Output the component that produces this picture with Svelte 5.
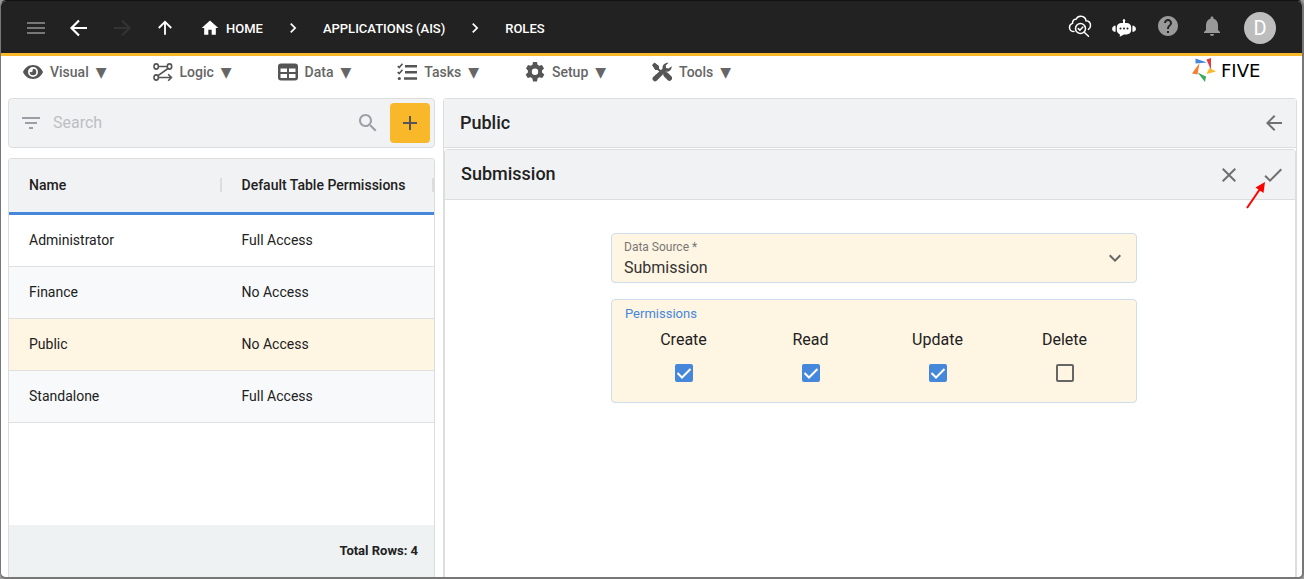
<script>
	const menus = ["Visual", "Logic", "Data", "Tasks", "Setup", "Tools"];

	let roles = [
		{ name: "Administrator", access: "Full Access" },
		{ name: "Finance", access: "No Access" },
		{ name: "Public", access: "No Access" },
		{ name: "Standalone", access: "Full Access" }
	];

	let permissions = [
		{ name: "Create", checked: true },
		{ name: "Read", checked: true },
		{ name: "Update", checked: true },
		{ name: "Delete", checked: false }
	];

	let selected = "Public";
	let search = "";
	let source = "Submission";
</script>

<div class="window">
	<header>
		<button class="icon dim" aria-label="Menu">
			<svg width="24" height="24" viewBox="0 0 24 24"><path d="M3 18h18v-2H3v2zm0-5h18v-2H3v2zm0-7v2h18V6H3z" /></svg>
		</button>
		<button class="icon" aria-label="Back">
			<svg width="24" height="24" viewBox="0 0 24 24"><path class="line" d="M20 12H5M12 4.500L4.500 12l7.500 7.500" /></svg>
		</button>
		<button class="icon off" aria-label="Forward" disabled>
			<svg width="24" height="24" viewBox="0 0 24 24"><path class="line" d="M4 12h15M12 4.500l7.500 7.500-7.500 7.500" /></svg>
		</button>
		<button class="icon" aria-label="Up">
			<svg width="20" height="20" viewBox="0 0 24 24"><path class="line" d="M12 20V5M4.500 12L12 4.500l7.500 7.500" /></svg>
		</button>
		<nav class="crumbs">
			<a href="#home">
				<svg width="20" height="20" viewBox="0 0 24 24"><path d="M10 20v-6h4v6h5v-8h3L12 3 2 12h3v8z" /></svg>
				HOME
			</a>
			<svg width="20" height="20" viewBox="0 0 24 24"><path d="M10 6L8.590 7.410 13.170 12l-4.580 4.590L10 18l6-6z" /></svg>
			<a href="#applications">APPLICATIONS (AIS)</a>
			<svg width="20" height="20" viewBox="0 0 24 24"><path d="M10 6L8.590 7.410 13.170 12l-4.580 4.590L10 18l6-6z" /></svg>
			<a href="#roles">ROLES</a>
		</nav>
		<div class="actions">
			<button class="icon raised" aria-label="Inspect cloud">
				<svg width="24" height="24" viewBox="0 0 24 24">
					<g fill="none" stroke="currentColor" stroke-width="1.500" stroke-linecap="round">
						<path d="M6 17.500C3.500 17.500 1.500 15.800 1.500 13.400c0-2 1.300-3.500 3-4C4.300 6.500 6 5 8 5.200 9 3.200 10.800 2 13 2.200c2.700.2 4.700 2 5 4.600 2.600.2 4.500 2.200 4.500 4.700 0 1.700-.8 3.100-2.100 3.900" />
						<circle cx="12.500" cy="14.500" r="5" />
						<path d="M16.200 18.200l4.300 4.100M10.300 14.600l1.600 1.600 3-3.200" />
					</g>
				</svg>
			</button>
			<button class="icon" aria-label="Assistant">
				<svg width="24" height="24" viewBox="0 0 24 24">
					<path d="M11 5.300a1.300 1.300 0 1 1 2 0V7h1.500c2.800 0 4.700 1.700 4.700 4.500v2.300c0 2.800-1.900 4.700-4.700 4.700H12l-4.200 2.300v-2.600C5.800 17.600 4.800 16 4.800 13.800v-2.300C4.800 8.700 6.700 7 9.500 7H11z" />
					<path d="M2.200 9.800h1.400v6H2.200c-.8 0-1-.6-1-1.200h-1v-3.300h1c0-.8.300-1.500 1-1.500zM20.400 9.800h1.400c.7 0 1 .7 1 1.500h1v3.300h-1c0 .6-.3 1.200-1 1.200h-1.400z" />
					<g fill="#222"><circle cx="8.500" cy="12.500" r="1" /><circle cx="12" cy="12.500" r="1" /><circle cx="15.500" cy="12.500" r="1" /></g>
				</svg>
			</button>
			<button class="icon grey raised" aria-label="Help">
				<svg width="24" height="24" viewBox="0 0 24 24"><path d="M12 2C6.480 2 2 6.480 2 12s4.480 10 10 10 10-4.480 10-10S17.520 2 12 2zm1 17h-2v-2h2v2zm2.070-7.750l-.9.920C13.450 12.900 13 13.500 13 15h-2v-.5c0-1.100.450-2.100 1.170-2.830l1.240-1.260c.370-.360.590-.860.590-1.410 0-1.100-.9-2-2-2s-2 .9-2 2H8c0-2.210 1.790-4 4-4s4 1.790 4 4c0 .880-.360 1.680-.930 2.250z" /></svg>
			</button>
			<button class="icon grey raised" aria-label="Notifications">
				<svg width="24" height="24" viewBox="0 0 24 24"><path d="M12 22c1.100 0 2-.9 2-2h-4c0 1.100.890 2 2 2zm6-6v-5c0-3.070-1.640-5.640-4.500-6.320V4c0-.830-.670-1.500-1.500-1.500s-1.500.670-1.500 1.500v.680C7.630 5.360 6 7.920 6 11v5l-2 2v1h16v-1l-2-2z" /></svg>
			</button>
			<button class="avatar">D</button>
		</div>
	</header>

	<div class="menubar">
		{#each menus as menu}
			<button class="menu">
				<svg width="20" height="20" viewBox="0 0 20 20">
					{#if menu === "Visual"}
						<path fill-rule="evenodd" d="M10 3C5.500 3 1.600 5.800 0 10c1.600 4.200 5.500 7 10 7s8.400-2.800 10-7c-1.600-4.200-5.500-7-10-7zm0 2a5 5 0 1 1 0 10 5 5 0 0 1 0-10z" />
						<path d="M10 6.700a3.300 3.300 0 1 1-3.300 3.300l2.500.3z" />
					{:else if menu === "Logic"}
						<g fill="none" stroke="currentColor" stroke-width="1.600">
							<ellipse cx="3.200" cy="4.500" rx="2.200" ry="2.600" /><ellipse cx="16.500" cy="4.500" rx="2.200" ry="2.600" /><ellipse cx="3.200" cy="15.500" rx="2.200" ry="2.600" />
							<path d="M5.400 4.500h8.900M15 6.500L5 13.700M5.400 15.500h12.500M15.200 12.300l3.200 3.200-3.200 3.200" />
						</g>
					{:else if menu === "Data"}
						<path fill-rule="evenodd" d="M3 1.500h14a3 3 0 0 1 3 3v11a3 3 0 0 1-3 3H3a3 3 0 0 1-3-3v-11a3 3 0 0 1 3-3zM2.500 6.500v3.500H9V6.500zm8.500 0V10h6.500V6.500zM2.500 12v4H9v-4zm8.500 0v4h6.500v-4z" />
					{:else if menu === "Tasks"}
						<path d="M8 3h12v2.400H8zM8 9h12v2.400H8zM7 15.300h13v2.400H7z" />
						<circle cx="2.300" cy="16.500" r="1.600" />
						<path fill="none" stroke="currentColor" stroke-width="1.600" d="M.7 4l1.500 1.500L5.500 1.800M.7 10l1.500 1.500L5.500 7.800" />
					{:else if menu === "Setup"}
						<path fill-rule="evenodd" d="M8 0h4l.6 2.800 1.700 1L17 3l2 3.500-2 1.900v2.100l2.300 2L17.300 16l-2.900-.8-1.800 1L12 19.500H8l-.7-3.300-1.700-1-2.900.8-2-3.500 2.200-2V8.400L1 6.500 3 3l2.700.8 1.700-1zM10 6.500a3.200 3.200 0 1 0 0 6.400 3.200 3.200 0 0 0 0-6.400z" />
					{:else}
						<path d="M2.500.5L7 4v2.500l3 2.700-1.500 1.500L5.500 8H3.200L0 3zM12 10.500c1.500-.8 3-.5 4 .5l3.300 3.300a2.600 2.600 0 0 1-3.700 3.700L12 14.500c-.8-1-1-2.300-.5-3.300z" />
						<path d="M19.600 4.200A5 5 0 0 1 13.500 9.700L5 18.600a2.700 2.700 0 0 1-3.900-3.700l9.400-8.200C10.200 3 12.800.4 16.500.7l-2.800 2.800.4 2.400 2.500.5z" />
					{/if}
				</svg>
				<span>{menu}</span>
				<span class="caret">▼</span>
			</button>
		{/each}
		<a class="logo" href="#five">
			<svg width="24" height="24" viewBox="0 0 24 24">
				<path fill="#4587da" d="M3.500.5L15 4.500 3.500 5.500z" />
				<path fill="#e0393e" d="M19 0v12L14.500 1.500z" />
				<path fill="#f8b82a" d="M14.500 16l3-6 6.500 3.500z" />
				<path fill="#3cab5a" d="M5.500 14.500l8.500 4-1 5.500z" />
				<path fill="#f77f30" d="M0 15.500L7.500 5 5.500 16.500z" />
			</svg>
			<span>FIVE</span>
		</a>
	</div>

	<main>
		<section class="list">
			<div class="search">
				<svg width="24" height="24" viewBox="0 0 24 24"><path d="M10 18h4v-2h-4v2zM3 6v2h18V6H3zm3 7h12v-2H6v2z" /></svg>
				<input type="text" placeholder="Search" aria-label="Search" bind:value={search} />
				<svg width="24" height="24" viewBox="0 0 24 24"><path d="M15.500 14h-.790l-.280-.270C15.410 12.590 16 11.110 16 9.500 16 5.910 13.090 3 9.500 3S3 5.910 3 9.500 5.910 16 9.500 16c1.610 0 3.090-.590 4.230-1.570l.270.280v.790l5 4.990L20.490 19l-4.990-5zm-6 0C7.010 14 5 11.990 5 9.500S7.010 5 9.500 5 14 7.010 14 9.500 11.990 14 9.500 14z" /></svg>
				<button class="add" aria-label="Add">
					<svg width="24" height="24" viewBox="0 0 24 24"><path d="M19 13h-6v6h-2v-6H5v-2h6V5h2v6h6v2z" /></svg>
				</button>
			</div>
			<div class="card">
				<table>
					<thead>
						<tr>
							<th><div>Name</div></th>
							<th><div>Default Table Permissions</div></th>
						</tr>
					</thead>
					<tbody>
						{#each roles as role}
							<tr class:selected={role.name === selected} on:click={() => (selected = role.name)}>
								<td>{role.name}</td>
								<td>{role.access}</td>
							</tr>
						{/each}
					</tbody>
				</table>
				<div class="total">Total Rows: {roles.length}</div>
			</div>
		</section>

		<section class="detail">
			<div class="bar">
				<h1>{selected}</h1>
				<button class="icon" aria-label="Close role">
					<svg width="24" height="24" viewBox="0 0 24 24"><path d="M20 11H7.830l5.590-5.590L12 4l-8 8 8 8 1.410-1.410L7.830 13H20v-2z" /></svg>
				</button>
			</div>
			<div class="inner">
				<div class="bar">
					<h2>{source}</h2>
					<button class="icon" aria-label="Cancel">
						<svg width="24" height="24" viewBox="0 0 24 24"><path d="M19 6.410L17.590 5 12 10.590 6.410 5 5 6.410 10.590 12 5 17.590 6.410 19 12 13.410 17.590 19 19 17.590 13.410 12z" /></svg>
					</button>
					<button class="icon save" aria-label="Save">
						<svg width="24" height="24" viewBox="0 0 24 24"><path d="M9 16.170L4.830 12l-1.420 1.410L9 19 21 7l-1.410-1.410z" /></svg>
						<svg class="pointer" width="20" height="28" viewBox="0 0 20 28"><path fill="none" stroke="#fe0000" stroke-width="2" d="M1 27L14 8" /><path fill="#fe0000" d="M19 1l-1.500 11L9.500 6.500z" /></svg>
					</button>
				</div>
				<form>
					<div class="field">
						<label for="source">Data Source *</label>
						<select id="source" bind:value={source}>
							<option>Submission</option>
						</select>
						<svg width="24" height="24" viewBox="0 0 24 24"><path d="M7.410 8.590L12 13.170l4.590-4.580L18 10l-6 6-6-6z" /></svg>
					</div>
					<div class="field permissions" role="group" aria-labelledby="permissions">
						<span id="permissions">Permissions</span>
						<div class="boxes">
							{#each permissions as permission}
								<label>
									{permission.name}
									<span class="box">
										<input type="checkbox" bind:checked={permission.checked} />
										{#if permission.checked}
											<svg width="18" height="18" viewBox="0 0 18 18"><path d="M2.500 9l4.500 4.500L15.500 5" /></svg>
										{/if}
									</span>
								</label>
							{/each}
						</div>
					</div>
				</form>
			</div>
		</section>
	</main>
</div>

<style>
	:global(body) {
		background: #999;
		font-family: Roboto, "Liberation Sans", sans-serif;
		color: #212121;
	}
	* {
		box-sizing: border-box;
	}
	svg {
		display: block;
		flex: none;
		fill: currentColor;
	}
	button {
		padding: 0;
		border: none;
		background: none;
		color: inherit;
		font: inherit;
		cursor: pointer;
	}
	a {
		color: inherit;
		text-decoration: none;
	}
	.window {
		display: flex;
		flex-direction: column;
		min-height: 100vh;
		border: solid #777;
		border-width: 1px 2px 2px 1px;
		border-top-color: #111;
		border-radius: 6px;
		background: #fff;
		overflow: hidden;
	}
	header {
		display: flex;
		align-items: center;
		height: 55px;
		padding: 2px 26px 0 13px;
		border-bottom: 3px solid #f8b82a;
		background: #222;
		color: #fff;
	}
	.icon {
		display: flex;
		justify-content: center;
		align-items: center;
		width: 43px;
		height: 44px;
	}
	.line {
		fill: none;
		stroke: currentColor;
		stroke-width: 2.2;
	}
	.dim {
		color: #777;
	}
	.off {
		color: #333;
	}
	.grey {
		color: #999;
	}
	.raised {
		padding-bottom: 4px;
	}
	.crumbs {
		display: flex;
		align-items: center;
		gap: 20px;
		margin-left: 14px;
		font-size: 13px;
		font-weight: 500;
	}
	.crumbs a {
		display: flex;
		align-items: center;
		gap: 6px;
	}
	.actions {
		display: flex;
		align-items: center;
		margin-left: auto;
	}
	.actions .icon {
		width: 44px;
	}
	.avatar {
		width: 32px;
		height: 32px;
		margin-left: 10px;
		border-radius: 50%;
		background: #bdbdbd;
		font-size: 20px;
	}
	.menubar {
		display: flex;
		align-items: center;
		gap: 46px;
		height: 34px;
		padding: 0 22px 2px;
		color: #555;
	}
	.menu {
		display: flex;
		align-items: center;
		gap: 7px;
		font-size: 14px;
		font-weight: 500;
		line-height: 20px;
	}
	.menu span {
		color: #666;
	}
	.menu .caret {
		font-family: "DejaVu Sans", sans-serif;
		font-weight: 400;
	}
	.logo {
		display: flex;
		align-items: center;
		gap: 5px;
		width: 88px;
		margin-left: auto;
		padding-bottom: 4px;
		color: #000;
		font-family: "DejaVu Sans", sans-serif;
		font-size: 18px;
	}
	main {
		display: grid;
		grid-template-columns: 1fr 2fr;
		gap: 8px;
		flex: 1;
		padding: 8px 5px 0 7px;
	}
	section {
		display: flex;
		flex-direction: column;
	}
	.list {
		gap: 10px;
	}
	.search {
		display: flex;
		align-items: center;
		height: 50px;
		padding: 0 4px 0 10px;
		border: 1px solid #ddd;
		border-radius: 4px;
		background: #f1f2f4;
		color: #9aa0a6;
	}
	.search input {
		flex: 1;
		min-width: 0;
		padding: 0 10px 2px;
		border: none;
		background: none;
		font: inherit;
		font-size: 16px;
		outline: none;
	}
	.search input::placeholder {
		color: #bdbfc1;
	}
	.add {
		display: flex;
		justify-content: center;
		align-items: center;
		width: 40px;
		height: 40px;
		margin-left: 10px;
		border-radius: 4px;
		background: #f8b82a;
		color: #555;
	}
	.card {
		display: flex;
		flex-direction: column;
		flex: 1;
		border: 1px solid #ddd;
		border-bottom: none;
		border-radius: 4px 4px 0 0;
		overflow: hidden;
	}
	table {
		width: 100%;
		table-layout: fixed;
		border-collapse: separate;
		border-spacing: 0;
		font-size: 14px;
	}
	th {
		height: 56px;
		padding: 0 0 2px;
		border-bottom: 3px solid #4587da;
		background: #f1f2f4;
		font-weight: 500;
		text-align: left;
	}
	th div {
		padding-left: 20px;
		border-right: 2px solid #ddd;
		line-height: 14px;
		white-space: nowrap;
	}
	td {
		height: 52px;
		padding: 0 20px 2px;
		border-bottom: 1px solid #e0e0e0;
	}
	tbody tr:nth-child(even) {
		background: #f8f9fb;
	}
	tbody tr.selected {
		background: #fff5e3;
	}
	.total {
		margin-top: auto;
		padding: 0 16px;
		background: #eef2f3;
		font-size: 13px;
		font-weight: 700;
		line-height: 52px;
		text-align: right;
	}
	.detail {
		border: 1px solid #ddd;
		border-bottom: none;
		border-radius: 4px 4px 0 0;
	}
	.bar {
		display: flex;
		align-items: center;
		height: 49px;
		padding-left: 16px;
		border-bottom: 1px solid #ddd;
		background: #f1f2f4;
	}
	.inner .bar {
		height: 50px;
	}
	h1,
	h2 {
		flex: 1;
		margin: 0;
		padding-bottom: 2px;
		font-size: 18px;
		font-weight: 500;
	}
	.bar .icon {
		width: 44px;
		color: #707070;
	}
	.inner {
		flex: 1;
		margin-top: 1px;
		border: 1px solid #ddd;
		border-bottom: none;
		border-radius: 4px 4px 0 0;
	}
	.save {
		position: relative;
	}
	.pointer {
		position: absolute;
		right: 29px;
		top: 28px;
	}
	form {
		display: flex;
		flex-direction: column;
		gap: 16px;
		padding: 33px 158px 0 166px;
	}
	.field {
		position: relative;
		border: 1px solid #cfdceb;
		border-radius: 4px;
		background: #fff5e3;
	}
	.field > label {
		display: block;
		padding: 5px 12px 0;
		color: #777;
		font-size: 12px;
		line-height: 16px;
	}
	select {
		display: block;
		width: 100%;
		height: 27px;
		padding: 0 12px 3px;
		border: none;
		appearance: none;
		background: none;
		color: #333;
		font: inherit;
		font-size: 16px;
	}
	.field > svg {
		position: absolute;
		right: 9px;
		top: 12px;
		color: #666;
		pointer-events: none;
	}
	.permissions {
		padding: 5px 8px 20px;
	}
	.permissions > span {
		display: block;
		padding-left: 5px;
		color: #4587da;
		font-size: 13px;
		line-height: 18px;
	}
	.boxes {
		display: grid;
		grid-template-columns: repeat(4, 1fr);
		margin-top: 7px;
	}
	.boxes label {
		display: flex;
		flex-direction: column;
		align-items: center;
		gap: 14px;
		font-size: 16px;
		line-height: 20px;
	}
	.box {
		display: grid;
	}
	.box > * {
		grid-area: 1 / 1;
	}
	.box input {
		width: 18px;
		height: 18px;
		margin: 0;
		border: 2px solid #666;
		border-radius: 2px;
		appearance: none;
	}
	.box input:checked {
		border-color: #4587da;
		background: #4587da;
	}
	.box svg {
		fill: none;
		stroke: #fff;
		stroke-width: 2;
		pointer-events: none;
	}
</style>
